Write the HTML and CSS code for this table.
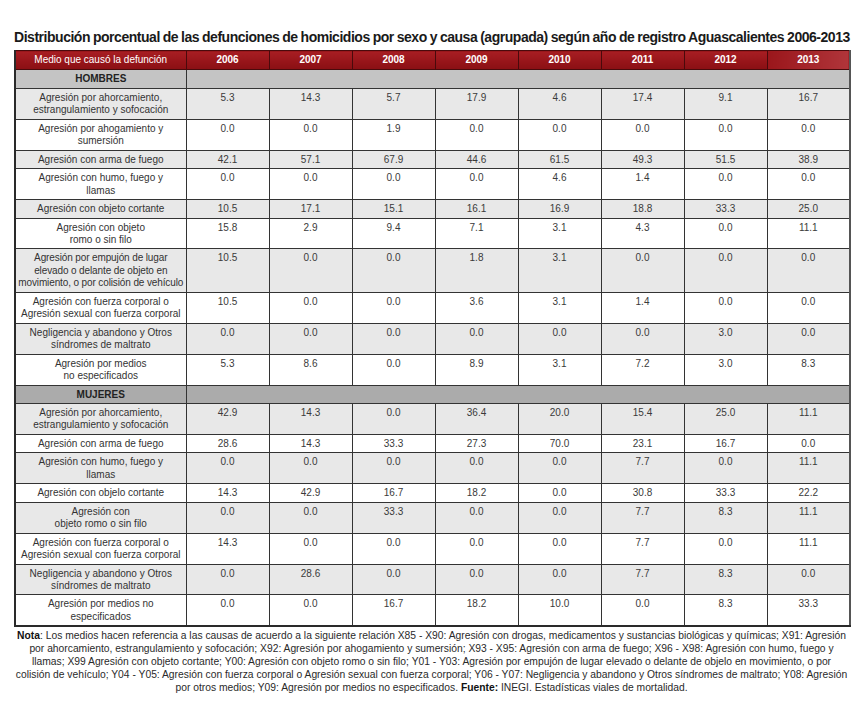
FILE: index.html
```html
<!DOCTYPE html>
<html lang="es">
<head>
<meta charset="utf-8">
<title>Distribución porcentual de las defunciones de homicidios</title>
<link rel="stylesheet" href="styles.css">
</head>
<body>
<div class="page">
  <h1 class="title">Distribución porcentual de las defunciones de homicidios por sexo y causa (agrupada) según año de registro Aguascalientes 2006-2013</h1>
  <table class="data">
    <colgroup>
      <col class="c-label"><col class="c-year"><col class="c-year"><col class="c-year"><col class="c-year"><col class="c-year"><col class="c-year"><col class="c-year"><col class="c-year">
    </colgroup>
    <thead>
      <tr class="head">
        <th class="h-label">Medio que causó la defunción</th>
        <th>2006</th><th>2007</th><th>2008</th><th>2009</th><th>2010</th><th>2011</th><th>2012</th><th>2013</th>
      </tr>
    </thead>
    <tbody>
      <tr class="group g-h"><td class="lbl">HOMBRES</td><td colspan="8"></td></tr>
      <tr class="alt"><td class="lbl">Agresión por ahorcamiento,<br>estrangulamiento y sofocación</td><td>5.3</td><td>14.3</td><td>5.7</td><td>17.9</td><td>4.6</td><td>17.4</td><td>9.1</td><td>16.7</td></tr>
      <tr><td class="lbl">Agresión por ahogamiento y<br>sumersión</td><td>0.0</td><td>0.0</td><td>1.9</td><td>0.0</td><td>0.0</td><td>0.0</td><td>0.0</td><td>0.0</td></tr>
      <tr class="alt"><td class="lbl">Agresión con arma de fuego</td><td>42.1</td><td>57.1</td><td>67.9</td><td>44.6</td><td>61.5</td><td>49.3</td><td>51.5</td><td>38.9</td></tr>
      <tr><td class="lbl">Agresión con humo, fuego y<br>llamas</td><td>0.0</td><td>0.0</td><td>0.0</td><td>0.0</td><td>4.6</td><td>1.4</td><td>0.0</td><td>0.0</td></tr>
      <tr class="alt"><td class="lbl">Agresión con objeto cortante</td><td>10.5</td><td>17.1</td><td>15.1</td><td>16.1</td><td>16.9</td><td>18.8</td><td>33.3</td><td>25.0</td></tr>
      <tr><td class="lbl">Agresión con objeto<br>romo o sin filo</td><td>15.8</td><td>2.9</td><td>9.4</td><td>7.1</td><td>3.1</td><td>4.3</td><td>0.0</td><td>11.1</td></tr>
      <tr class="alt"><td class="lbl tight">Agresión por empujón de lugar<br>elevado o delante de objeto en<br>movimiento, o por colisión de vehículo</td><td>10.5</td><td>0.0</td><td>0.0</td><td>1.8</td><td>3.1</td><td>0.0</td><td>0.0</td><td>0.0</td></tr>
      <tr><td class="lbl">Agresión con fuerza corporal o<br>Agresión sexual con fuerza corporal</td><td>10.5</td><td>0.0</td><td>0.0</td><td>3.6</td><td>3.1</td><td>1.4</td><td>0.0</td><td>0.0</td></tr>
      <tr class="alt"><td class="lbl">Negligencia y abandono y Otros<br>síndromes de maltrato</td><td>0.0</td><td>0.0</td><td>0.0</td><td>0.0</td><td>0.0</td><td>0.0</td><td>3.0</td><td>0.0</td></tr>
      <tr><td class="lbl">Agresión por medios<br>no especificados</td><td>5.3</td><td>8.6</td><td>0.0</td><td>8.9</td><td>3.1</td><td>7.2</td><td>3.0</td><td>8.3</td></tr>
      <tr class="group g-m"><td class="lbl">MUJERES</td><td colspan="8"></td></tr>
      <tr class="alt"><td class="lbl">Agresión por ahorcamiento,<br>estrangulamiento y sofocación</td><td>42.9</td><td>14.3</td><td>0.0</td><td>36.4</td><td>20.0</td><td>15.4</td><td>25.0</td><td>11.1</td></tr>
      <tr><td class="lbl">Agresión con arma de fuego</td><td>28.6</td><td>14.3</td><td>33.3</td><td>27.3</td><td>70.0</td><td>23.1</td><td>16.7</td><td>0.0</td></tr>
      <tr class="alt"><td class="lbl">Agresión con humo, fuego y<br>llamas</td><td>0.0</td><td>0.0</td><td>0.0</td><td>0.0</td><td>0.0</td><td>7.7</td><td>0.0</td><td>11.1</td></tr>
      <tr><td class="lbl">Agresión con objelo cortante</td><td>14.3</td><td>42.9</td><td>16.7</td><td>18.2</td><td>0.0</td><td>30.8</td><td>33.3</td><td>22.2</td></tr>
      <tr class="alt"><td class="lbl">Agresión con<br>objeto romo o sin filo</td><td>0.0</td><td>0.0</td><td>33.3</td><td>0.0</td><td>0.0</td><td>7.7</td><td>8.3</td><td>11.1</td></tr>
      <tr><td class="lbl">Agresión con fuerza corporal o<br>Agresión sexual con fuerza corporal</td><td>14.3</td><td>0.0</td><td>0.0</td><td>0.0</td><td>0.0</td><td>7.7</td><td>0.0</td><td>11.1</td></tr>
      <tr class="alt"><td class="lbl">Negligencia y abandono y Otros<br>síndromes de maltrato</td><td>0.0</td><td>28.6</td><td>0.0</td><td>0.0</td><td>0.0</td><td>7.7</td><td>8.3</td><td>0.0</td></tr>
      <tr><td class="lbl">Agresión por medios no<br>especificados</td><td>0.0</td><td>0.0</td><td>16.7</td><td>18.2</td><td>10.0</td><td>0.0</td><td>8.3</td><td>33.3</td></tr>
    </tbody>
  </table>
  <p class="note"><b>Nota</b>: Los medios hacen referencia a las causas de acuerdo a la siguiente relación X85 - X90: Agresión con drogas, medicamentos y sustancias biológicas y químicas; X91: Agresión<br>por ahorcamiento, estrangulamiento y sofocación; X92: Agresión por ahogamiento y sumersión; X93 - X95: Agresión con arma de fuego; X96 - X98: Agresión con humo, fuego y<br>llamas; X99 Agresión con objeto cortante; Y00: Agresión con objeto romo o sin filo; Y01 - Y03: Agresión por empujón de lugar elevado o delante de objelo en movimiento, o por<br>colisión de vehículo; Y04 - Y05: Agresión con fuerza corporal o Agresión sexual con fuerza corporal; Y06 - Y07: Negligencia y abandono y Otros síndromes de maltrato; Y08: Agresión<br>por otros medios; Y09: Agresión por medios no especificados. <b>Fuente:</b> INEGI. Estadísticas viales de mortalidad.</p>
</div>
</body>
</html>
```

FILE: styles.css
```css
html, body {
  margin: 0;
  padding: 0;
  background: #ffffff;
}

.page {
  width: 835px;
  padding: 29px 0 0 14px;
  font-family: "Liberation Sans", Arial, sans-serif;
  color: #333;
}

.title {
  margin: 0 0 4px 0;
  font-size: 14px;
  line-height: 17px;
  font-weight: bold;
  color: #1a1a1a;
  white-space: nowrap;
  letter-spacing: -0.47px;
  word-spacing: -0.5px;
}

.data {
  width: 835px;
  table-layout: fixed;
  border-collapse: collapse;
  font-size: 10px;
  line-height: 12.45px;
  border-left: 2px solid #2a2a2a;
  border-right: 2px solid #555;
  border-bottom: 2px solid #2a2a2a;
}

.c-label { width: 171px; }
.c-year { width: 83px; }

.data th,
.data td {
  border: 1px solid #333;
  padding: 3px 2px 2px 2px;
  text-align: center;
  vertical-align: top;
  color: #3a3a3a;
}

.data td.lbl {
  padding-left: 0;
  padding-right: 0;
  white-space: nowrap;
  color: #333;
}

.data td.tight {
  letter-spacing: -0.12px;
}

.head th {
  background: linear-gradient(to bottom, #a81e23 0%, #961419 60%, #8a1014 100%);
  color: #ffffff;
  font-weight: bold;
  border-color: #4a0a0c;
  padding: 3px 2px 3px 2px;
}

.head th.h-label {
  font-weight: normal;
}

.head th:last-child {
  background: linear-gradient(to right, #9a161b 0%, #b0353a 100%);
}

.alt td {
  background: #e8e8e8;
}

.group td {
  background: #c4c4c4;
  padding-top: 3px;
  padding-bottom: 2px;
}

.g-m td {
  background: #ababab;
}

.group td.lbl {
  font-weight: bold;
  color: #222;
}

.note {
  margin: 3px 0 0 0;
  font-size: 10.3px;
  line-height: 12.8px;
  text-align: center;
  color: #2a2a2a;
  white-space: nowrap;
}

.note b {
  color: #111;
}
```
